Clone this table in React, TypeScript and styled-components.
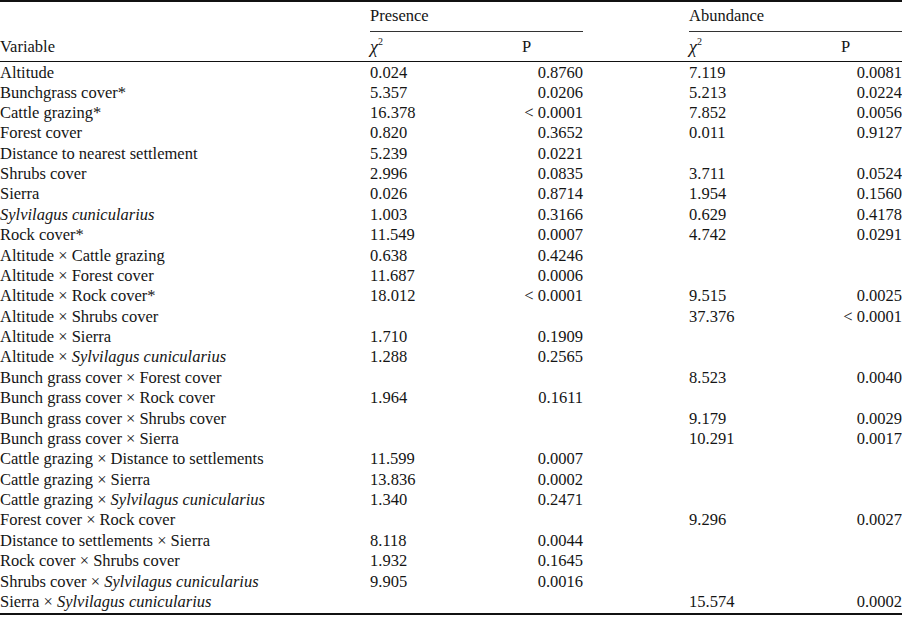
import styled, { createGlobalStyle } from "styled-components";

// One row of the results table
interface Row {
  variable: React.ReactNode;
  presChi?: string;
  presP?: string;
  abunChi?: string;
  abunP?: string;
}

const Sp = ({ children }: { children: React.ReactNode }) => <em>{children}</em>;
const SYL = <Sp>Sylvilagus cunicularius</Sp>;

const rows: Row[] = [
  { variable: "Altitude", presChi: "0.024", presP: "0.8760", abunChi: "7.119", abunP: "0.0081" },
  { variable: "Bunchgrass cover*", presChi: "5.357", presP: "0.0206", abunChi: "5.213", abunP: "0.0224" },
  { variable: "Cattle grazing*", presChi: "16.378", presP: "< 0.0001", abunChi: "7.852", abunP: "0.0056" },
  { variable: "Forest cover", presChi: "0.820", presP: "0.3652", abunChi: "0.011", abunP: "0.9127" },
  { variable: "Distance to nearest settlement", presChi: "5.239", presP: "0.0221" },
  { variable: "Shrubs cover", presChi: "2.996", presP: "0.0835", abunChi: "3.711", abunP: "0.0524" },
  { variable: "Sierra", presChi: "0.026", presP: "0.8714", abunChi: "1.954", abunP: "0.1560" },
  { variable: SYL, presChi: "1.003", presP: "0.3166", abunChi: "0.629", abunP: "0.4178" },
  { variable: "Rock cover*", presChi: "11.549", presP: "0.0007", abunChi: "4.742", abunP: "0.0291" },
  { variable: "Altitude × Cattle grazing", presChi: "0.638", presP: "0.4246" },
  { variable: "Altitude × Forest cover", presChi: "11.687", presP: "0.0006" },
  { variable: "Altitude × Rock cover*", presChi: "18.012", presP: "< 0.0001", abunChi: "9.515", abunP: "0.0025" },
  { variable: "Altitude × Shrubs cover", abunChi: "37.376", abunP: "< 0.0001" },
  { variable: "Altitude × Sierra", presChi: "1.710", presP: "0.1909" },
  { variable: <>Altitude × {SYL}</>, presChi: "1.288", presP: "0.2565" },
  { variable: "Bunch grass cover × Forest cover", abunChi: "8.523", abunP: "0.0040" },
  { variable: "Bunch grass cover × Rock cover", presChi: "1.964", presP: "0.1611" },
  { variable: "Bunch grass cover × Shrubs cover", abunChi: "9.179", abunP: "0.0029" },
  { variable: "Bunch grass cover × Sierra", abunChi: "10.291", abunP: "0.0017" },
  { variable: "Cattle grazing × Distance to settlements", presChi: "11.599", presP: "0.0007" },
  { variable: "Cattle grazing × Sierra", presChi: "13.836", presP: "0.0002" },
  { variable: <>Cattle grazing × {SYL}</>, presChi: "1.340", presP: "0.2471" },
  { variable: "Forest cover × Rock cover", abunChi: "9.296", abunP: "0.0027" },
  { variable: "Distance to settlements × Sierra", presChi: "8.118", presP: "0.0044" },
  { variable: "Rock cover × Shrubs cover", presChi: "1.932", presP: "0.1645" },
  { variable: <>Shrubs cover × {SYL}</>, presChi: "9.905", presP: "0.0016" },
  { variable: <>Sierra × {SYL}</>, abunChi: "15.574", abunP: "0.0002" },
];

const Chi = () => (
  <>
    <ChiGlyph>χ</ChiGlyph>
    <Sup>2</Sup>
  </>
);

const App = () => {
  return (
    <>
      <GlobalStyle />
      <Table>
        <colgroup>
          <col style={{ width: 370 }} />
          <col style={{ width: 100 }} />
          <col style={{ width: 113 }} />
          <col style={{ width: 106 }} />
          <col style={{ width: 100 }} />
          <col style={{ width: 113 }} />
        </colgroup>
        <thead>
          <GroupRow>
            <HeadCell />
            <GroupCell colSpan={2}>Presence</GroupCell>
            <HeadCell />
            <GroupCell colSpan={2}>Abundance</GroupCell>
          </GroupRow>
          <SubRow>
            <HeadCell>Variable</HeadCell>
            <HeadCell><Chi /></HeadCell>
            <HeadCell $center>P</HeadCell>
            <HeadCell />
            <HeadCell><Chi /></HeadCell>
            <HeadCell $center>P</HeadCell>
          </SubRow>
        </thead>
        <tbody>
          {rows.map((r, i) => (
            <BodyRow key={i} $last={i === rows.length - 1}>
              <Cell>{r.variable}</Cell>
              <Cell>{r.presChi}</Cell>
              <Cell $right>{r.presP}</Cell>
              <Cell />
              <Cell>{r.abunChi}</Cell>
              <Cell $right>{r.abunP}</Cell>
            </BodyRow>
          ))}
        </tbody>
      </Table>
    </>
  );
};

const GlobalStyle = createGlobalStyle`
  html, body {
    margin: 0;
    padding: 0;
    background: #fff;
  }
  body {
    font-family: "Liberation Serif", "DejaVu Serif", serif;
    color: #151515;
  }
`;

const Table = styled.table`
  width: 902px;
  table-layout: fixed;
  border-collapse: collapse;
  font-size: 16.5px;
  border-top: 2px solid #111;
  border-bottom: 2px solid #111;
`;

const GroupRow = styled.tr`
  height: 30px;
`;

const SubRow = styled.tr`
  height: 30px;
  border-bottom: 1.5px solid #111;
`;

const HeadCell = styled.th<{ $center?: boolean }>`
  padding: 2px 0 0;
  font-weight: normal;
  text-align: ${(p) => (p.$center ? "center" : "left")};
  vertical-align: middle;
  white-space: nowrap;
`;

const GroupCell = styled(HeadCell)`
  border-bottom: 1.5px solid #333;
  padding: 0 0 1px;
`;

const ChiGlyph = styled.i`
  font-size: 18px;
`;

const Sup = styled.sup`
  font-size: 10px;
  vertical-align: 8px;
`;

const BodyRow = styled.tr<{ $last?: boolean }>`
  height: ${(p) => (p.$last ? "23px" : "20.38px")};
`;

const Cell = styled.td<{ $right?: boolean }>`
  padding: 2px 0 0;
  text-align: ${(p) => (p.$right ? "right" : "left")};
  vertical-align: top;
  white-space: nowrap;
  line-height: 18px;

  em {
    font-style: italic;
  }
`;

export default App;
